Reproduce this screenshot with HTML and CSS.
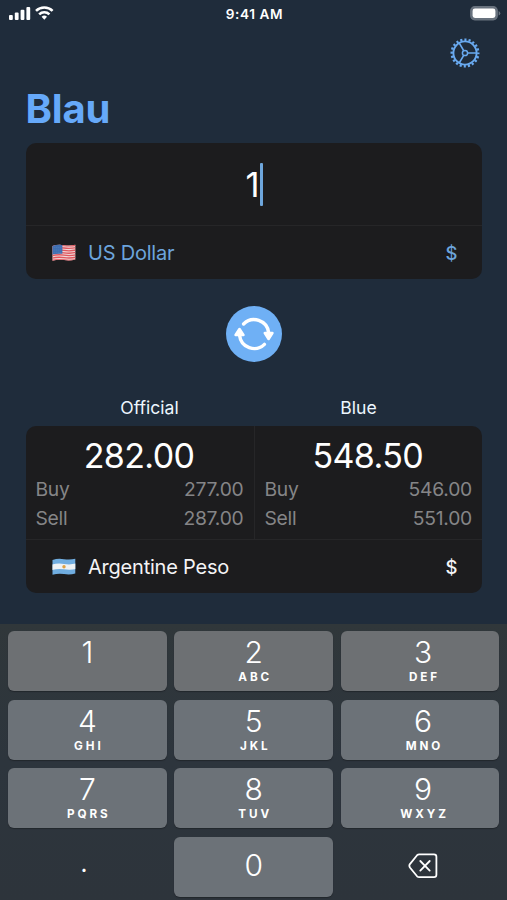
FILE: index.html
```html
<!DOCTYPE html>
<html lang="en">
<head>
<meta charset="utf-8">
<title>Blau</title>
<link rel="stylesheet" href="styles.css">
</head>
<body>
<div class="app">
  <header class="status">
    <div class="status-left">
      <svg width="46" height="16" viewBox="0 0 46 16" fill="#fff">
        <rect x="0" y="10" width="3.8" height="5" rx="1"/>
        <rect x="5.8" y="7.6" width="3.8" height="7.4" rx="1"/>
        <rect x="11.6" y="4.8" width="3.8" height="10.2" rx="1"/>
        <rect x="17.4" y="2" width="3.8" height="13" rx="1"/>
        <g fill="none" stroke="#fff" stroke-width="2.6">
          <path d="M27 5.9A12 12 0 0 1 43.6 5.9"/>
          <path d="M30.2 9.4A7.3 7.3 0 0 1 40.4 9.4"/>
        </g>
        <path d="M32.6 11.8A4 4 0 0 1 38 11.8L35.3 14.8Z"/>
      </svg>
    </div>
    <div class="time">9:41 AM</div>
    <div class="status-right">
      <svg width="31" height="15" viewBox="0 0 31 15">
        <rect x="0.8" y="0.8" width="26.4" height="13" rx="4" fill="#68727e" stroke="#68727e" stroke-width="1.4"/>
        <rect x="2.6" y="2.6" width="22.8" height="9.4" rx="2.4" fill="#fff"/>
        <path d="M28.6 5Q30.3 5.7 30.3 7.3T28.6 9.6Z" fill="#68727e"/>
      </svg>
    </div>
  </header>

  <nav class="nav">
    <svg width="30" height="30" viewBox="-15 -15 30 30" fill="none" stroke="#69aaf0">
      <circle r="13.3" stroke-width="2.4" stroke-dasharray="2.1 2.078" stroke-dashoffset="1"/>
      <circle r="11.6" stroke-width="1.9"/>
      <circle r="2.6" stroke-width="1.5"/>
      <path d="M2.6 0H11.5M-1.3 -2.3L-5.8 -10M-1.3 2.3L-5.8 10" stroke-width="1.6"/>
    </svg>
  </nav>

  <h1 class="title">Blau</h1>

  <section class="card">
    <div class="amount"><span>1</span><i class="caret"></i></div>
    <div class="currency active">
      <svg class="flag" width="24" height="18" viewBox="0 0 24 18">
        <clipPath id="us"><path d="M.5 1.9Q6 .2 12 1.2T23.3 .8V15.6Q18 17 12 16.1T.5 16.8Z"/></clipPath>
        <g clip-path="url(#us)">
          <path d="M0 0H24V18H0Z" fill="#f0d5d5"/>
          <path d="M0 2Q6 .5 12 1.5T24 1.2M0 4.5Q6 3 12 4T24 3.6M0 6.9Q6 5.4 12 6.4T24 6M0 9.3Q6 7.8 12 8.8T24 8.4M0 11.7Q6 10.2 12 11.2T24 10.8M0 14.1Q6 12.6 12 13.6T24 13.2M0 16.5Q6 15 12 16T24 15.6" fill="none" stroke="#e0575f" stroke-width="1.35"/>
          <path d="M0 0H10.4V9.8Q5 9.4 0 10.6Z" fill="#3f6fb2"/>
          <path d="M1.8 3.6H10M1.8 6H10M1.8 8.3H10" stroke="#5c86c0" stroke-width=".7" stroke-dasharray=".8 1.2"/>
        </g>
      </svg>
      <span class="name">US Dollar</span>
      <span class="symbol">$</span>
    </div>
  </section>

  <div class="swap-row">
    <button class="swap" aria-label="Swap">
      <svg width="56" height="56" viewBox="-28 -28 56 56" fill="none" stroke="#fff" stroke-width="3.4" stroke-linecap="round" stroke-linejoin="round">
        <path d="M-10.4 -10A14.7 14.7 0 0 1 14.6 -1.5"/>
        <path d="M10.4 10.4A14.7 14.7 0 0 1 -14.4 1.5"/>
        <path d="M10.8 -1H18.4L14.6 5Z" fill="#fff" stroke-width="2.6"/>
        <path d="M-18.4 1H-10.6L-14.5 -5Z" fill="#fff" stroke-width="2.6"/>
      </svg>
    </button>
  </div>

  <div class="labels"><span>Official</span><span>Blue</span></div>

  <section class="card">
    <div class="rates">
      <div class="rate">
        <div class="mid">282.00</div>
        <div class="line"><span>Buy</span><span>277.00</span></div>
        <div class="line"><span>Sell</span><span>287.00</span></div>
      </div>
      <div class="rate">
        <div class="mid">548.50</div>
        <div class="line"><span>Buy</span><span>546.00</span></div>
        <div class="line"><span>Sell</span><span>551.00</span></div>
      </div>
    </div>
    <div class="currency">
      <svg class="flag" width="24" height="18" viewBox="0 0 24 18">
        <clipPath id="ar"><path d="M.5 1.9Q6 .2 12 1.2T23.3 .8V15.6Q18 17 12 16.1T.5 16.8Z"/></clipPath>
        <g clip-path="url(#ar)">
          <path d="M0 0H24V18H0Z" fill="#70ade0"/>
          <path d="M0 6.6Q6 5 12 6T24 5.6V11Q18 12.3 12 11.3T0 12Z" fill="#edf1f4"/>
          <circle cx="12" cy="8.7" r="1.7" fill="#dea144"/>
        </g>
      </svg>
      <span class="name">Argentine Peso</span>
      <span class="symbol">$</span>
    </div>
  </section>

  <div class="keyboard">
    <div class="key k1"><b>1</b></div>
    <div class="key k1"><b>2</b><small>ABC</small></div>
    <div class="key k1 third"><b>3</b><small>DEF</small></div>
    <div class="key"><b>4</b><small>GHI</small></div>
    <div class="key"><b>5</b><small>JKL</small></div>
    <div class="key third"><b>6</b><small>MNO</small></div>
    <div class="key"><b>7</b><small>PQRS</small></div>
    <div class="key"><b>8</b><small>TUV</small></div>
    <div class="key third"><b>9</b><small>WXYZ</small></div>
    <div class="key plain dot"><b>.</b></div>
    <div class="key zero"><b>0</b></div>
    <div class="key plain third del">
      <svg width="30" height="26" viewBox="0 0 30 26" fill="none" stroke="#fff" stroke-width="1.8" stroke-linecap="round" stroke-linejoin="round">
        <path d="M11.2 1.3H26Q28.4 1.3 28.4 3.7V21.8Q28.4 24.2 26 24.2H11.2Q10 24.2 9.1 23.3L1.9 14.5Q.8 12.8 1.9 11.1L9.1 2.2Q10 1.3 11.2 1.3Z"/>
        <path d="M12.3 8L21.7 17.6M21.7 8L12.3 17.6"/>
      </svg>
    </div>
  </div>
</div>
</body>
</html>
```

FILE: styles.css
```css
* { box-sizing: border-box; }
body {
  margin: 0;
  background: #1f2c3b;
  color: #fff;
  font-family: Inter, "Liberation Sans", sans-serif;
}
svg { display: block; flex: none; }
.app {
  width: 507px;
  height: 900px;
  overflow: hidden;
  display: flex;
  flex-direction: column;
  background: #1f2c3b;
}
.status {
  height: 28px;
  flex: none;
  display: grid;
  grid-template-columns: 1fr auto 1fr;
  align-items: center;
  padding: 0 6px 0 9px;
}
.status-left svg { margin-top: -3px; }
.status-right { justify-self: end; }
.status-right svg { margin: -2px 0 0; }
.time { font-size: 13.6px; font-weight: 600; letter-spacing: .6px; margin-left: -1px; }
.nav {
  height: 56px;
  flex: none;
  display: flex;
  justify-content: flex-end;
  padding: 9.5px 27px 0 0;
}
.title {
  margin: 0 0 9px 25.5px;
  height: 50px;
  line-height: 50px;
  font-size: 40px;
  font-weight: 700;
  letter-spacing: -.2px;
  color: #66a9f9;
}
.card {
  flex: none;
  margin: 0 25px 0 25.5px;
  background: #1c1c1e;
  border-radius: 10px;
  overflow: hidden;
}
.amount {
  height: 82px;
  display: flex;
  justify-content: center;
  align-items: center;
  font-size: 34.5px;
  padding-left: 1px;
}
.caret {
  width: 3px;
  height: 43px;
  margin: 1px 0 0 .5px;
  border-radius: 1px;
  background: #6ea6dc;
}
.currency {
  height: 54px;
  border-top: 1px solid #262628;
  display: flex;
  align-items: center;
  padding: 1px 24.5px 0 26px;
  font-size: 20px;
  color: #f4f4f6;
}
.currency.active { color: #6ca4dc; }
.name { margin-left: 12.5px; flex: 1; letter-spacing: -.22px; }
.symbol { font-weight: 500; font-size: 18.5px; }
.swap-row {
  height: 109px;
  flex: none;
  display: flex;
  justify-content: center;
  align-items: center;
}
.swap {
  width: 56px;
  height: 56px;
  padding: 0;
  border: 0;
  border-radius: 50%;
  background: #6fb0f5;
}
.labels {
  height: 38px;
  flex: none;
  padding: 0 44px 0 45px;
  display: grid;
  grid-template-columns: 1fr 1fr;
  text-align: center;
  font-size: 17.6px;
  line-height: 40px;
  color: #edf7ff;
}
.rates { display: grid; grid-template-columns: 228px 1fr; height: 113px; }
.rate { padding: 10px 10px 0; }
.rate + .rate { border-left: 1px solid #262628; }
.mid { height: 40px; line-height: 40px; text-align: center; font-size: 34px; letter-spacing: -.6px; margin-left: -1px; }
.line {
  height: 29.5px;
  line-height: 29.5px;
  margin-top: -1.5px;
  display: flex;
  justify-content: space-between;
  font-size: 19.3px;
  letter-spacing: -.25px;
  color: #858587;
}
.line + .line { margin-top: 0; }
.keyboard {
  margin-top: auto;
  height: 276px;
  flex: none;
  padding: 7px 7.5px 4px 8px;
  display: grid;
  grid-template-columns: repeat(3, 1fr);
  grid-template-rows: repeat(4, 60px);
  column-gap: 7.5px;
  row-gap: 8.5px;
  background: linear-gradient(#30373a, #2d353d 50%, #2d343b);
}
.key {
  display: flex;
  flex-direction: column;
  align-items: center;
  border-radius: 6px;
  padding-top: 4px;
  background: #6c7278;
  box-shadow: 0 1px 1px #22272c;
}
.k1 { background: #6d7073; }
.key b { font-size: 30px; line-height: 35px; font-weight: 350; }
.key small {
  font-size: 11.7px;
  line-height: 14px;
  font-weight: 700;
  letter-spacing: 2.9px;
  margin-right: -2.9px;
}
.third { padding-left: 6px; }
.zero { padding-top: 11px; }
.plain { background: none; box-shadow: none; justify-content: center; padding-top: 0; }
.dot { padding: 0 7px 10px 0; }
.del { padding-bottom: 2px; }
```
